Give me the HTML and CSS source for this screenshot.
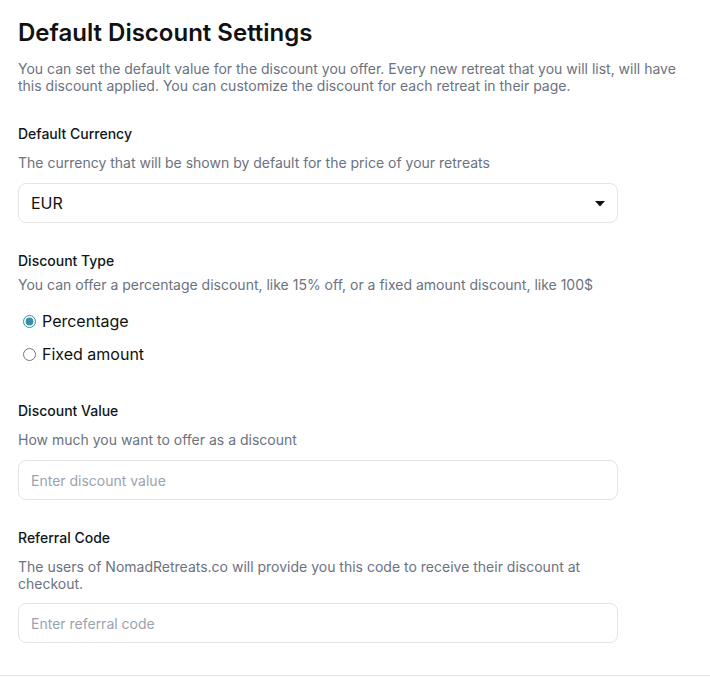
FILE: index.html
```html
<!DOCTYPE html>
<html lang="en">
<head>
<meta charset="utf-8">
<title>Default Discount Settings</title>
<link rel="stylesheet" href="styles.css">
</head>
<body>
<main class="settings">
  <h1 class="title">Default Discount Settings</h1>
  <p class="intro">You can set the default value for the discount you offer. Every new retreat that you will list, will have this discount applied. You can customize the discount for each retreat in their page.</p>

  <section class="field">
    <h2 class="label">Default Currency</h2>
    <p class="hint">The currency that will be shown by default for the price of your retreats</p>
    <div class="select">
      <span class="select-value">EUR</span>
      <svg class="caret" width="10" height="6" viewBox="0 0 10 6"><path d="M0 0 H10 L5 5.5 Z" fill="#111"/></svg>
    </div>
  </section>

  <section class="field field-type">
    <h2 class="label">Discount Type</h2>
    <p class="hint hint-tight">You can offer a percentage discount, like 15% off, or a fixed amount discount, like 100$</p>
    <div class="radios">
      <label class="radio"><input type="radio" name="type" checked><span>Percentage</span></label>
      <label class="radio"><input type="radio" name="type"><span>Fixed amount</span></label>
    </div>
  </section>

  <section class="field">
    <h2 class="label">Discount Value</h2>
    <p class="hint">How much you want to offer as a discount</p>
    <input class="text-input" type="text" placeholder="Enter discount value">
  </section>

  <section class="field">
    <h2 class="label">Referral Code</h2>
    <p class="hint hint-multi">The users of NomadRetreats.co will provide you this code to receive their discount at checkout.</p>
    <input class="text-input" type="text" placeholder="Enter referral code">
  </section>
</main>
</body>
</html>
```

FILE: styles.css
```css
html, body {
  margin: 0;
  padding: 0;
  background: #ffffff;
}

body {
  font-family: Inter, "Noto Sans", "Liberation Sans", sans-serif;
  color: #111827;
}

.settings {
  padding: 18px 18px 32px;
  border-bottom: 1px solid #e5e5e5;
}

.title {
  margin: 0;
  font-size: 24px;
  line-height: 29px;
  font-weight: 600;
  color: #111111;
}

.intro {
  margin: 13px 0 0;
  font-size: 14px;
  line-height: 17px;
  color: #6b7280;
}

.field {
  max-width: 600px;
  margin-top: 31px;
  display: flex;
  flex-direction: column;
}

.field + .field {
  margin-top: 29px;
}

.label {
  margin: 0;
  font-size: 14px;
  line-height: 17px;
  font-weight: 500;
  color: #0f1720;
}

.hint {
  margin: 12px 0 12px;
  font-size: 14px;
  line-height: 17px;
  color: #6b7280;
}

.hint-tight {
  margin: 7px 0 16px;
}

.hint-multi {
  margin-bottom: 11px;
}

.select {
  height: 40px;
  box-sizing: border-box;
  border: 1px solid #e4e4e4;
  border-radius: 8px;
  display: flex;
  align-items: center;
  justify-content: space-between;
  padding: 0 12px 0 12px;
}

.select-value {
  font-size: 16px;
  color: #111111;
}

.caret {
  display: block;
  margin-top: 1px;
}

.radios {
  display: flex;
  flex-direction: column;
  gap: 9px;
  padding-bottom: 7px;
}

.radio {
  display: flex;
  align-items: center;
  height: 24px;
  font-size: 16px;
  color: #111111;
}

.radio input {
  margin: 0 6px 0 5px;
  width: 13px;
  height: 13px;
  accent-color: #3a8ea2;
}

.text-input {
  height: 40px;
  box-sizing: border-box;
  border: 1px solid #e4e4e4;
  border-radius: 8px;
  padding: 0 12px;
  font-family: inherit;
  font-size: 14px;
  color: #111111;
  outline: none;
  background: #ffffff;
}

.text-input::placeholder {
  color: #9ca3af;
}
```
